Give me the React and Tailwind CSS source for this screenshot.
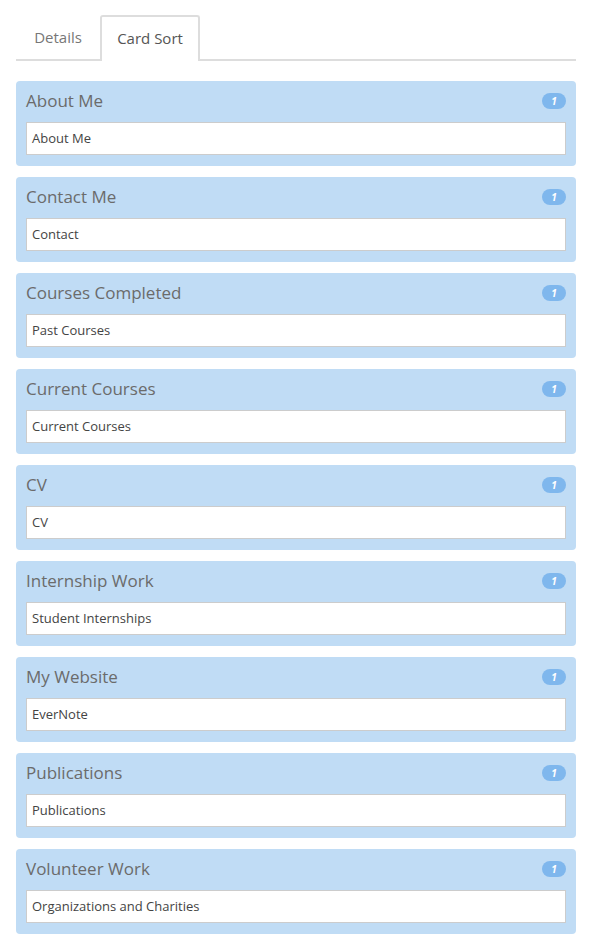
import React from "react";

const cards = [
  { id: 1, title: "About Me", value: "About Me" },
  { id: 2, title: "Contact Me", value: "Contact" },
  { id: 3, title: "Courses Completed", value: "Past Courses" },
  { id: 4, title: "Current Courses", value: "Current Courses" },
  { id: 5, title: "CV", value: "CV" },
  { id: 6, title: "Internship Work", value: "Student Internships" },
  { id: 7, title: "My Website", value: "EverNote" },
  { id: 8, title: "Publications", value: "Publications" },
  { id: 9, title: "Volunteer Work", value: "Organizations and Charities" },
];

function SortCard({ card }) {
  return (
    <div className="rounded-[4px] bg-[#c0dcf5] px-[10px] pt-[9px] pb-[11px]">
      <div className="flex items-center justify-between h-[22px] mb-[10px]">
        <span className="text-[17px] text-[#6b6b6b]">{card.title}</span>
        <span className="flex items-center justify-center w-[24px] h-[16px] rounded-full bg-[#7fb7ed] text-white text-[10px] font-bold italic leading-none">
          1
        </span>
      </div>
      <div className="h-[33px] flex items-center bg-white border border-[#cccccc] px-[5px] text-[13px] text-[#444]">
        {card.value}
      </div>
    </div>
  );
}

export default function App() {
  return (
    <div
      className="w-[592px] min-h-[949px] bg-white px-4 pt-[15px]"
      style={{ fontFamily: '"Open Sans", "Liberation Sans", sans-serif' }}
    >
      {/* Tabs */}
      <div className="flex border-b-2 border-[#dddddd] h-[46px]">
        <div className="w-[84px] flex items-center justify-center text-[15px] text-[#777]">
          Details
        </div>
        <div className="w-[100px] -mb-[2px] flex items-center justify-center bg-white border-2 border-b-0 border-[#dddddd] rounded-t-[3px] text-[15px] text-[#555] pb-[2px]">
          Card Sort
        </div>
      </div>

      {/* Cards */}
      <div className="flex flex-col gap-[11px] mt-[20px]">
        {cards.map((card) => (
          <SortCard key={card.id} card={card} />
        ))}
      </div>
    </div>
  );
}
